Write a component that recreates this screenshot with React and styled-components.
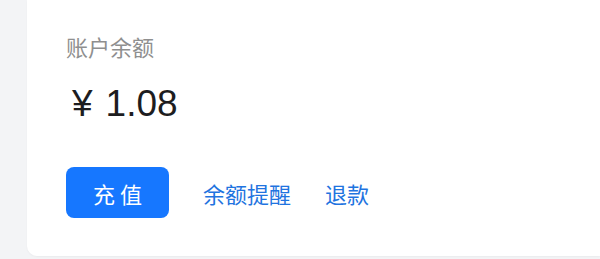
import React from 'react';
import styled, { createGlobalStyle } from 'styled-components';

const GlobalStyle = createGlobalStyle`
  html, body {
    margin: 0;
    padding: 0;
    background: #f3f4f6;
  }
  body {
    font-family: "Noto Sans CJK SC", "Noto Sans", sans-serif;
  }
`;

const Page = styled.div`
  display: flex;
  width: 600px;
  height: 259px;
  padding: 0 0 3px 27px;
  box-sizing: border-box;
  overflow: hidden;
`;

const Card = styled.section`
  flex: 1;
  display: flex;
  flex-direction: column;
  background: #ffffff;
  border-bottom-left-radius: 10px;
  box-shadow: 0 1px 2px rgba(0, 0, 0, 0.04);
  padding: 30px 0 38px 39px;
`;

const Label = styled.div`
  font-size: 22px;
  line-height: 33px;
  color: #8f8f8f;
`;

const Amount = styled.div`
  margin-top: 16px;
  display: flex;
  align-items: baseline;
  font-family: "Liberation Sans", Arial, "Noto Sans CJK SC", sans-serif;
  font-size: 37px;
  line-height: 49px;
  color: #1d1d1f;
  padding-left: 6px;
`;

const Currency = styled.span`
  margin-right: 13px;
`;

const Actions = styled.div`
  margin-top: 39px;
  display: flex;
  align-items: center;
  gap: 34px;
`;

const PrimaryButton = styled.button`
  width: 103px;
  height: 51px;
  border: none;
  border-radius: 8px;
  background: #1677ff;
  color: #ffffff;
  font-family: inherit;
  font-size: 22px;
  padding: 0;
  cursor: pointer;
`;

const LinkButton = styled.button`
  border: none;
  background: none;
  padding: 0;
  color: #1f74e0;
  font-family: inherit;
  font-size: 22px;
  line-height: 30px;
  cursor: pointer;
`;

export default function App() {
  return (
    <>
      <GlobalStyle />
      <Page>
        <Card>
          <Label>账户余额</Label>
          <Amount>
            <Currency>¥</Currency>
            1.08
          </Amount>
          <Actions>
            <PrimaryButton>充 值</PrimaryButton>
            <LinkButton>余额提醒</LinkButton>
            <LinkButton>退款</LinkButton>
          </Actions>
        </Card>
      </Page>
    </>
  );
}
